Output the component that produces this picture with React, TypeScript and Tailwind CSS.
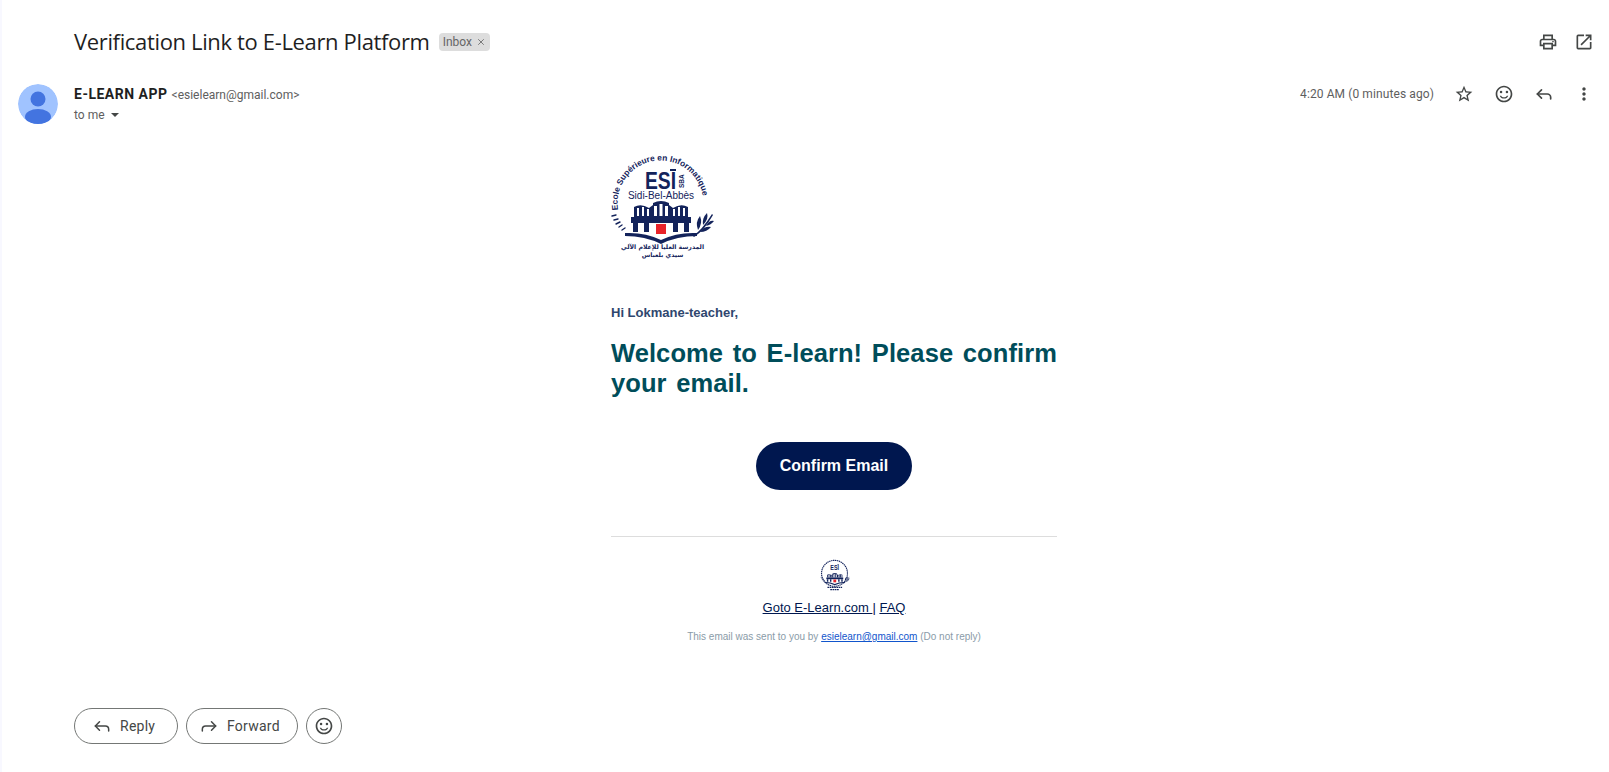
import { Reply, Forward, X } from "lucide-react";
import {
  MdOutlinePrint,
  MdOpenInNew,
  MdStarBorder,
  MdOutlineSentimentSatisfiedAlt,
  MdMoreVert,
} from "react-icons/md";

const BLUE = "#13235b";

/** School crest from the mail body. Box is 110x112, footer reuses the drawing small without the ring text. */
function Crest({ className, small = false }: { className: string; small?: boolean }) {
  return (
    <svg viewBox="0 0 110 112" className={`${className} overflow-visible`}>
      <defs>
        <path id="crest-arc" d="M13 58 A43 43 0 1 1 98.5 51" />
      </defs>
      {small ? (
        <circle cx="55" cy="50" r="46" fill="none" stroke={BLUE} strokeWidth="4" strokeDasharray="5 2" />
      ) : (
        <text fontFamily="Liberation Sans, sans-serif" fontSize="8.4" fontWeight="700" fill={BLUE}>
          <textPath href="#crest-arc">Ecole Supérieure en Informatique</textPath>
        </text>
      )}
      <text
        x="40"
        y="37"
        fontFamily="Liberation Sans, sans-serif"
        fontSize="24"
        fontWeight="700"
        fill={BLUE}
        textLength="31"
        lengthAdjust="spacingAndGlyphs"
      >
        ESI
      </text>
      <rect x="65" y="17" width="6" height="2" fill={BLUE} />
      {!small && (
        <>
          <text
            transform="translate(79 36) rotate(-90)"
            fontFamily="Liberation Sans, sans-serif"
            fontSize="6.5"
            fontWeight="700"
            fill={BLUE}
          >
            SBA
          </text>
          <text x="56" y="47" textAnchor="middle" fontFamily="Liberation Sans, sans-serif" fontSize="10" fill={BLUE}>
            Sidi-Bel-Abbès
          </text>
        </>
      )}
      {/* building */}
      <g fill={BLUE}>
        <path d="M29 65 V55 Q36 51 44 56 L48 53 V51 Q56 47 64 51 V53 L68 56 Q76 51 83 55 V65 Z" />
        <rect x="26" y="65" width="60" height="6" />
        <path d="M28 71 H33 V80 H28 Z M39 71 H44 V80 H39 Z M68 71 H73 V80 H68 Z M79 71 H84 V80 H79 Z" />
        <path d="M20 81 Q40 80 56 88 Q72 80 92 81 V84 Q72 84 56 92 Q40 84 20 84 Z" />
      </g>
      <g fill="#ffffff">
        <rect x="32" y="56" width="2" height="8" />
        <rect x="37" y="55" width="2" height="9" />
        <rect x="42" y="57" width="2" height="7" />
        <rect x="49" y="54" width="3" height="10" />
        <rect x="54.5" y="52" width="3" height="12" />
        <rect x="60" y="54" width="3" height="10" />
        <rect x="68" y="57" width="2" height="7" />
        <rect x="73" y="55" width="2" height="9" />
        <rect x="78" y="56" width="2" height="8" />
      </g>
      <rect x="51" y="72" width="10" height="10" fill="#e8232a" />
      {/* laurels */}
      <g fill={BLUE}>
        <path d="M88 84 Q97 78 107 62 L108 63 Q99 79 89 85 Z" />
        <path d="M93 78 Q90 70 95 64 Q98 71 93 78 Z" />
        <path d="M98 73 Q97 66 102 61 Q104 67 98 73 Z" />
        <path d="M95 80 Q102 80 106 75 Q99 74 95 80 Z" />
        <path d="M101 74 Q106 73 109 69 Q104 68 101 74 Z" />
      </g>
      <g stroke={BLUE} strokeWidth="1.4" strokeLinecap="round" fill="none">
        <path d="M7 64 L11 63 M9 68 L13 67 M11 72 L15 70 M14 75 L17 73 M17 78 L20 76" />
      </g>
      {small ? (
        <g stroke={BLUE} strokeWidth="4" strokeDasharray="6 2">
          <path d="M30 100 H82" />
          <path d="M40 108 H72" />
        </g>
      ) : (
        <g fontFamily="DejaVu Sans, sans-serif" fontSize="6.2" fontWeight="700" fill={BLUE} textAnchor="middle">
          <text x="57.5" y="97">المدرسة العليا للإعلام الآلي</text>
          <text x="57.5" y="105">سيدي بلعباس</text>
        </g>
      )}
    </svg>
  );
}

function Avatar() {
  return (
    <svg viewBox="0 0 40 40" className="w-10 h-10 shrink-0 rounded-full">
      <circle cx="20" cy="20" r="20" fill="#a0c3ff" />
      <circle cx="20" cy="15" r="7.5" fill="#4374e0" />
      <ellipse cx="20" cy="33" rx="13" ry="8" fill="#4374e0" />
    </svg>
  );
}

export default function App() {
  return (
    <div
      className="h-[772px] overflow-hidden bg-white border-l-2 border-[#f8f8ff] text-[#202124]"
      style={{ fontFamily: "Roboto, sans-serif" }}
    >
      {/* subject */}
      <div className="flex items-center h-[84px] pl-[72px] pr-[15px]">
        <h1 className="pb-[2px] text-[22px] leading-7 font-normal text-[#1f1f1f] font-['Open_Sans',sans-serif] tracking-[-0.35px]">
          Verification Link to E-Learn Platform
        </h1>
        <span className="ml-[9px] flex items-center gap-1 h-[18px] px-1 rounded bg-[#dddddd] text-xs text-[#666666]">
          Inbox
          <X className="w-2.5 h-2.5" strokeWidth={2} />
        </span>
        <div className="ml-auto flex items-center gap-4 text-[#444746]">
          <MdOutlinePrint size={20} />
          <MdOpenInNew size={20} />
        </div>
      </div>

      {/* sender */}
      <div className="flex pl-4 pr-[15px]">
        <Avatar />
        <div className="ml-4">
          <div className="flex items-baseline gap-1 leading-5">
            <span className="text-sm font-bold tracking-[0.5px] text-[#1f1f1f]">E-LEARN APP</span>
            <span className="text-xs text-[#5e5e5e]">&lt;esielearn@gmail.com&gt;</span>
          </div>
          <div className="flex items-center gap-1.5 mt-[1px] text-xs leading-5 text-[#5e5e5e]">
            to me
            <span className="w-0 h-0 border-x-4 border-x-transparent border-t-4 border-t-[#444746]" />
          </div>
        </div>
        <div className="ml-auto flex items-center gap-5 h-5 text-[#444746]">
          <span className="text-xs tracking-[0.1px] text-[#5e5e5e]">4:20 AM (0 minutes ago)</span>
          <MdStarBorder size={20} />
          <MdOutlineSentimentSatisfiedAlt size={20} />
          <Reply size={20} strokeWidth={2} />
          <MdMoreVert size={20} />
        </div>
      </div>

      {/* mail body */}
      <div className="w-[446px] ml-[609px] font-['Liberation_Sans',sans-serif]">
        <Crest className="w-[110px] h-[112px] -ml-[6px] mt-[27px]" />
        <p className="mt-[41px] text-[13px] leading-4 font-bold text-[#2f466e]">Hi Lokmane-teacher,</p>
        <h2 className="mt-[17px] text-[25.5px] leading-[30px] font-bold text-[#004d5a] tracking-[0.08px] [word-spacing:2.5px]">
          Welcome to E-learn! Please confirm your email.
        </h2>
        <div className="flex justify-center mt-[44px]">
          <a className="flex items-center justify-center w-[156px] h-12 rounded-3xl bg-[#00174f] text-base font-bold text-white">
            Confirm Email
          </a>
        </div>
        <div className="mt-[46px] border-t border-[#dddddd]" />
        <div className="flex flex-col items-center">
          <Crest className="w-[31px] h-[32px] mt-[22px]" small />
          <p className="mt-[7px] text-[13px] leading-5 text-[#00174f]">
            <a className="underline">Goto E-Learn.com </a> | <a className="underline">FAQ</a>
          </p>
          <p className="mt-[11px] text-[10px] leading-4 text-[#8a9ba8]">
            This email was sent to you by <a className="underline text-[#1155cc]">esielearn@gmail.com</a> (Do not reply)
          </p>
        </div>
      </div>

      {/* reply bar */}
      <div className="flex gap-2 pl-[72px] mt-[63px] text-sm tracking-[0.25px] text-[#444746]">
        <button className="flex items-center gap-2 h-9 w-[104px] pl-[17px] rounded-full border border-[#747775]">
          <Reply size={20} strokeWidth={1.8} />
          Reply
        </button>
        <button className="flex items-center gap-2 h-9 w-[112px] pl-3 rounded-full border border-[#747775]">
          <Forward size={20} strokeWidth={1.8} />
          Forward
        </button>
        <button className="flex items-center justify-center w-9 h-9 rounded-full border border-[#747775]">
          <MdOutlineSentimentSatisfiedAlt size={20} />
        </button>
      </div>
    </div>
  );
}
